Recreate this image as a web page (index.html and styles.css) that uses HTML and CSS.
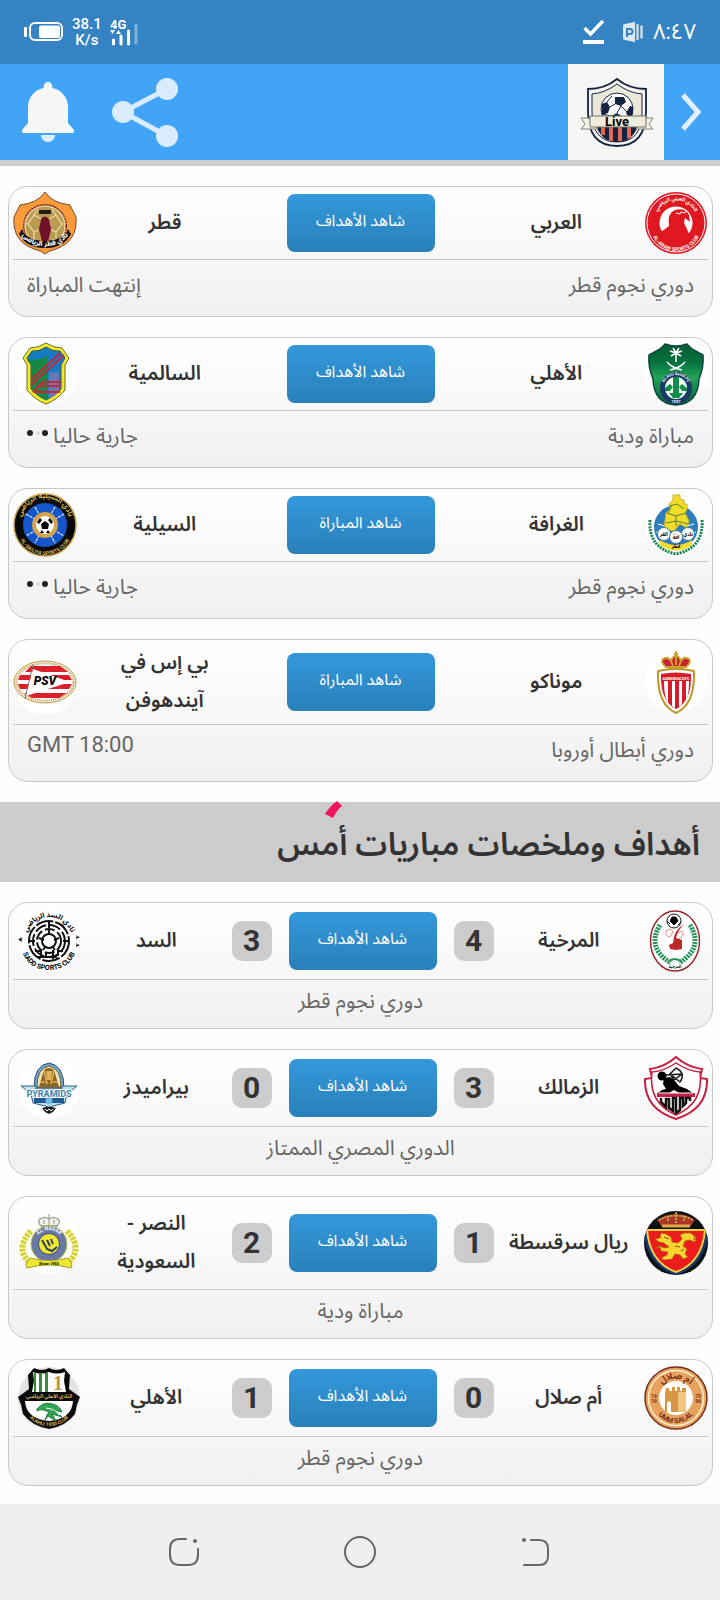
FILE: index.html
```html
<!DOCTYPE html>
<html lang="ar" dir="rtl">
<head>
<meta charset="utf-8">
<meta name="viewport" content="width=device-width, initial-scale=1">
<title>Live</title>
<link rel="stylesheet" href="styles.css">
</head>
<body>
<div class="status" dir="ltr">
  <div class="status-group">
    <svg width="40" height="20" viewBox="0 0 40 20"><rect x="0" y="5" width="3" height="10" rx="1" fill="#fff"/><rect x="6" y="1" width="32" height="17" rx="5" fill="none" stroke="#fff" stroke-width="2"/><rect x="15" y="3.500" width="21" height="12.500" rx="2" fill="#fff"/></svg>
    <div class="speed"><span>38.1</span><span>K/s</span></div>
    <svg width="29" height="28" viewBox="0 0 29 28"><text x="0" y="11" class="net">4G</text><path d="M0 12h5l-2.500 4zM6 16h5l-2.500-4z" fill="#fff"/><path d="M3.500 22v4M11 18v8M18.500 13v13" stroke="#fff" stroke-width="3" stroke-linecap="round"/><path d="M26 7v18" stroke="#7fb2dd" stroke-width="3" stroke-linecap="round"/></svg>
  </div>
  <div class="status-group right">
    <svg width="22" height="26" viewBox="0 0 22 26"><path d="M1.500 9l6 6L20 2" fill="none" stroke="#fff" stroke-width="3.500"/><rect y="21" width="21" height="4" fill="#fff"/></svg>
    <svg width="20" height="20" viewBox="0 0 20 20"><path d="M2 2l10-2v20L2 18q-2 0-2-2V4q0-2 2-2z" fill="#dbe9f5"/><path d="M4 15V7h3a2.500 2.500 0 0 1 0 5H4" fill="none" stroke="#3583c3" stroke-width="2"/><path d="M14.500 2v16M18.500 3.500v13" stroke="#c4dcef" stroke-width="2.500"/></svg>
    <span class="clock">٨:٤٧</span>
  </div>
</div>
<header class="bar" dir="ltr">
  <div class="actions">
    <button class="icon" type="button" aria-label="التنبيهات"><svg width="54" height="64" viewBox="0 0 54 64"><path d="M27 2c3 0 4 2 4.500 6C41 10 47 18 47 27v16l6 7v3H1v-3l6-7V27C7 18 13 10 22.500 8 23 4 24 2 27 2z" fill="#f6f6f6"/><path d="M20 55h14c0 4-3 7-7 7s-7-3-7-7z" fill="#dceefe"/></svg></button>
    <button class="icon" type="button" aria-label="مشاركة"><svg width="68" height="70" viewBox="0 0 68 70"><path d="M56 12L12 35l44 24" fill="none" stroke="#d9ecfd" stroke-width="5"/><g fill="#d9ecfd"><circle cx="56" cy="12" r="11"/><circle cx="12" cy="35" r="11"/><circle cx="56" cy="59" r="11"/></g></svg></button>
  </div>
  <div class="brand">
    <div class="tile"><svg width="96" height="96" viewBox="0 0 96 96"><path d="M49 15Q37 25 20 25v22q0 35 29 35t29-35V25Q61 25 49 15z" fill="#f6f6f6" stroke="#14233f" stroke-width="1.800"/><path d="M49 20Q37 29 24 30v18q0 30 25 30t25-30V30Q61 29 49 20z" fill="#ebe8da" stroke="#14233f" stroke-width="1"/><path d="M28 61h42q-5 17-21 17T28 61z" fill="#14233f"/><path d="M35 62v9M43 62v15M52 62v15M61 62v12" stroke="#e16855" stroke-width="4"/><circle cx="49" cy="45" r="16" fill="#fff" stroke="#14233f"/><path d="M47 33h9l2 5-5 4-6-2zM34 40l5-2 3 5-2 6-6 2zM62 42l3 1v7l-4 4-3-5zM43 52l6-3 6 4-2 6H44z" fill="#14233f"/><path d="M42 43l5-3M49 49l4-7M53 42l6 6M39 38l5-6M34 50l9 2" stroke="#14233f"/><path d="M20 54h-7l4 6-4 5h17M78 54h7l-4 6 4 5H68" fill="#f3f1e6" stroke="#7c8475"/><path d="M22 52h56v11H22z" fill="#efecdc" stroke="#6d7468"/><text x="49" y="62" class="live">Live</text></svg></div>
    <button class="icon" type="button" aria-label="رجوع"><svg width="22" height="40" viewBox="0 0 22 40"><path d="M3 3l15 17L3 37" fill="none" stroke="#e3f1fe" stroke-width="5"/></svg></button>
  </div>
</header>

<main>
<section class="list today">
  <article class="card">
    <div class="teams">
      <svg class="crest" viewBox="0 0 64 64"><circle cx="32" cy="32" r="31" fill="#e01822"/><circle cx="32" cy="32" r="29" fill="none" stroke="#fff"/><circle cx="32" cy="32" r="16.500" fill="#fff"/><path d="M17 41l8-6q-2-13 6-16 10-3 14 5l1 7-5-4q-2 5 1 9l4 9q-14 9-26 0z" fill="#e01822"/><path d="M32 22l4 1 1-2 4 1 1-2" fill="none" stroke="#fff"/><path id="ar1" d="M11 30a21 21 0 0 1 42 0" fill="none"/><path id="ar2" d="M7 35a25 25 0 0 0 50 0" fill="none"/><text class="c5 white"><textPath href="#ar1" startOffset="50%">النادي العربي الرياضي</textPath></text><text class="c5 white"><textPath href="#ar2" startOffset="50%">AL-ARABI SPORTS CLUB</textPath></text></svg>
      <h3 class="team">العربي</h3>
      <button class="watch" type="button">شاهد الأهداف</button>
      <h3 class="team">قطر</h3>
      <svg class="crest" viewBox="0 0 64 64"><path d="M32 1q7 11 25 13l6 12q2 24-20 32-8 2-11 5-3-3-11-5Q-1 50 1 26l6-12Q25 12 32 1z" fill="#f99a3b" stroke="#7b4b25"/><circle cx="32" cy="35" r="21" fill="#6c1327" stroke="#6c1327" stroke-width="2" stroke-dasharray="2 1"/><circle cx="32" cy="35" r="20" fill="#b99a51" stroke="#e7d49b" stroke-width="1.500"/><path d="M21 24l-6 9 6 8 9-4v-8zM43 24l6 9-6 8-9-4v-8zM21 41v8M43 41v8M21 24l4-6M43 24l-4-6M15 33h-3M49 33h3" fill="none" stroke="#eedca2" stroke-width="1.200"/><path d="M28 28q4-5 8 0l1 6q2 4 0 8l-2 9h-6l-2-9q-2-4 0-8z" fill="#701029"/><path d="M26 19h12v4H26z" fill="#211c16"/><path d="M9 38q3 11 23 12 20-1 23-12l3 5q-7 14-26 14T6 43z" fill="#111"/><path id="qt" d="M8 43q8 12 24 12t24-12" fill="none"/><text class="c7 white"><textPath href="#qt" startOffset="50%">نادي قطر الرياضي</textPath></text></svg>
    </div>
    <div class="info"><span>دوري نجوم قطر</span><span>إنتهت المباراة</span></div>
  </article>

  <article class="card">
    <div class="teams">
      <svg class="crest" viewBox="0 0 64 64"><circle cx="32" cy="32" r="31" fill="#fff"/><defs><linearGradient id="ahg" x2="0" y2="1"><stop offset="0" stop-color="#075b32"/><stop offset=".3" stop-color="#06713e"/><stop offset=".55" stop-color="#22a457"/><stop offset="1" stop-color="#075b38"/></linearGradient></defs><path d="M21 2q11 4 22 0l5 5 11 6q1 12-4 24-1 25-23 26Q10 62 9 37 4 25 5 13l11-6z" fill="url(#ahg)" stroke="#0c463d" stroke-width="1.500"/><path d="M32 10v10M32 11l-6-2M32 11l6-2M32 11l-5 3M32 11l5 3M32 11l-3-5M32 11l3-5" stroke="#fff" stroke-width="1.500"/><path d="M23 20q5 6 15 8M41 20q-5 6-15 8" fill="none" stroke="#fff" stroke-width="1.500"/><circle cx="32" cy="46" r="16" fill="#173b65"/><circle cx="32" cy="46" r="11" fill="#f0fff4"/><path d="M29 35h6v21h-6zM21 46l5-4 3 3-3 4h-5zM43 46l-5-4-3 3 3 4h5zM25 51h4v5zM35 51h4l-4 5z" fill="#148c4c"/><path id="ah" d="M19 46a13 13 0 0 1 26 0" fill="none"/><text class="c4 white"><textPath href="#ah" startOffset="50%">Al-Ahli Saudi FC</textPath></text><text x="32" y="61" class="c4 white">1937</text></svg>
      <h3 class="team">الأهلي</h3>
      <button class="watch" type="button">شاهد الأهداف</button>
      <h3 class="team">السالمية</h3>
      <svg class="crest" viewBox="0 0 64 64"><circle cx="33" cy="32" r="31" fill="#fff"/><path d="M33 1q8 5 16 5l7 10-4 7v25q-8 10-19 14Q22 58 14 48V23l-4-7 7-10q8 0 16-5z" fill="#f5e928" stroke="#666b25"/><path d="M33 5q7 5 14 4l5 7-4 7v24q-6 7-15 11-9-4-15-11V23l-4-7 5-7q7 1 14-4z" fill="#157cc4" stroke="#344f58"/><path d="M14 18q11 0 21-4v43l-2 1q-9-4-15-11V23z" fill="#168649"/><path d="M36 30h10v20q-5 5-10 7z" fill="#6779b5"/><path d="M18 38l29-27M18 43l33-30M20 50l10-10h18M24 44h24M20 50h27" stroke="#d22236" stroke-width="1.800" fill="none"/></svg>
    </div>
    <div class="info"><span>مباراة ودية</span><span class="live-now">جارية حاليا<svg width="22" height="10" viewBox="0 0 22 10"><circle cx="3" cy="5" r="3" fill="#222"/><circle cx="11" cy="5" r="2" fill="#ddd"/><circle cx="18" cy="5" r="3" fill="#222"/></svg></span></div>
  </article>

  <article class="card">
    <div class="teams">
      <svg class="crest" viewBox="0 0 64 64"><circle cx="32" cy="32" r="31" fill="#fff"/><circle cx="32" cy="34" r="22" fill="#2f7cba"/><path d="M14 31l7 2 2 8M50 31l-7 2-2 8M12 39l12 3M52 39l-12 3" stroke="#fff" fill="none"/><path d="M29 2h7v4l4 1v4h3v5l-2 4 4 8-2 7-7-4-6 7-10-2 2-16 4-4-1-5 4-4z" fill="#f2dc27" stroke="#c5b42a"/><path d="M25 13l8-2 7 5M23 20l9 3 10-3M32 23v10M22 30l10-2 12 3M28 12l-4 8" fill="none" stroke="#55843a"/><path d="M6 27q-2 28 26 34 28-6 26-34" fill="none" stroke="#168354" stroke-width="3" stroke-dasharray="2 1"/><path d="M16 47q16 10 32 0v5q-16 11-32 0z" fill="#f5dc2e"/><g fill="#fff" stroke="#397f9d"><circle cx="20" cy="41" r="6.500"/><circle cx="44" cy="41" r="6.500"/><circle cx="32" cy="44" r="6.500"/></g><g class="c5"><text x="20" y="43">الغر</text><text x="32" y="46">افة</text><text x="44" y="43">نادي</text><text x="32" y="55">قطر</text></g></svg>
      <h3 class="team">الغرافة</h3>
      <button class="watch" type="button">شاهد المباراة</button>
      <h3 class="team">السيلية</h3>
      <svg class="crest" viewBox="0 0 64 64"><circle cx="32" cy="32" r="31" fill="#090909" stroke="#c4a14b" stroke-width="1.500"/><circle cx="32" cy="32" r="22" fill="#1556cc"/><path d="M13 21l38 22M51 21L13 43M22 14l20 36M42 14L22 50" stroke="#dce7ff" stroke-width="1.300" stroke-dasharray="3 1"/><circle cx="32" cy="32" r="13" fill="#d2a24d"/><circle cx="32" cy="32" r="9" fill="#fff"/><path d="M32 28l4 3-1 5h-6l-1-5zM24 29l3-4 2 2-3 4zM40 29l-3-4-2 2 3 4zM27 40l2-3 2 3zM37 40l-2-3-2 3z"/><path id="sl1" d="M8 29a24 24 0 0 1 48 0" fill="none"/><path id="sl2" d="M5 35a27 27 0 0 0 54 0" fill="none"/><text class="c7 gold"><textPath href="#sl1" startOffset="50%">نادي السيلية الرياضي</textPath></text><text class="c5 gold"><textPath href="#sl2" startOffset="50%">AL-SAILIYA SPORTS CLUB</textPath></text></svg>
    </div>
    <div class="info"><span>دوري نجوم قطر</span><span class="live-now">جارية حاليا<svg width="22" height="10" viewBox="0 0 22 10"><circle cx="3" cy="5" r="3" fill="#222"/><circle cx="11" cy="5" r="2" fill="#ddd"/><circle cx="18" cy="5" r="3" fill="#222"/></svg></span></div>
  </article>

  <article class="card">
    <div class="teams">
      <svg class="crest" viewBox="0 0 64 64"><circle cx="32" cy="32" r="31" fill="#fff"/><path d="M22 17q-6-5-3-8 5-3 8 2 2-5 5-5t5 5q3-5 8-2 3 3-3 8z" fill="#c92034" stroke="#caa12d" stroke-width="2"/><path d="M32 1v14M30 4h4M24 18h16M27 11l2 5M37 11l-2 5" stroke="#caa12d" stroke-width="2"/><path d="M14 21q18-4 36 0 1 34-18 42Q13 55 14 21z" fill="#fff" stroke="#bd992b" stroke-width="2"/><path d="M17 24q15-3 30 0 1 27-15 35-16-8-15-35z" fill="#d71b29"/><path d="M20 31h4v22q-4-6-4-22zM28 31h3v27l-3-2zM35 31h3v23l-3 3zM42 31h3q0 14-3 20z" fill="#fff"/><text x="32" y="30" class="c4 white">ASMONACOFC</text></svg>
      <h3 class="team">موناكو</h3>
      <button class="watch" type="button">شاهد المباراة</button>
      <h3 class="team">بي إس في آيندهوفن</h3>
      <svg class="crest" viewBox="0 0 64 64"><circle cx="32" cy="34" r="31" fill="#fff"/><ellipse cx="32" cy="32" rx="31" ry="21" fill="#f8edcf" stroke="#bd9b55"/><ellipse cx="32" cy="32" rx="28.500" ry="18.500" fill="#fff" stroke="#c3a164" stroke-width="2" stroke-dasharray="1 1"/><path d="M18 16h29l8 6H12zM7 25h49l3 5H5zM5 34h54l-3 5H7zM11 43h43l-8 5H19z" fill="#db202b"/><path d="M20 19l37 13-44 14z" fill="#fff"/><path d="M20 14L12 49" stroke="#777"/><text x="32" y="35" class="psv">PSV</text></svg>
    </div>
    <div class="info"><span>دوري أبطال أوروبا</span><span class="time" dir="ltr">GMT 18:00</span></div>
  </article>
</section>

<div class="heading">
  <svg class="spinner" width="18" height="18" viewBox="0 0 18 18"><path d="M12 0l5 5q-5 4-9 12L0 13Q5 5 12 0z" fill="#ee1561"/></svg>
  <h2>أهداف وملخصات مباريات أمس</h2>
</div>

<section class="list yesterday">
  <article class="card">
    <div class="teams">
      <svg class="crest" viewBox="0 0 64 64"><ellipse cx="31" cy="32" rx="24.500" ry="30" fill="#fff" stroke="#9c2730" stroke-width="1.500"/><path d="M16 16Q2 39 27 54M46 16q14 23-11 38" fill="none" stroke="#25945a" stroke-width="5" stroke-dasharray="2 1"/><circle cx="30" cy="12" r="7" fill="#fff" stroke="#111"/><path d="M28 8h4l2 4-4 4-4-4zM23 12l3 3M34 16l3-3" stroke="#111"/><path d="M40 15q-6 6-8 14l6 2v9l-6 1-6-1-1-4 4-2 1-6q2-8 10-13z" fill="#bd292b"/><path d="M22 22q5-4 7 1l-3 5q-5 0-4-6zM34 24q6-4 5 2l-4 4" fill="none" stroke="#e18b86"/><path d="M24 53q7-6 14 0" fill="none" stroke="#25945a" stroke-width="2"/><text x="31" y="59" class="c4">المرخية</text></svg>
      <h3 class="team">المرخية</h3><span class="score">4</span>
      <button class="watch" type="button">شاهد الأهداف</button>
      <span class="score">3</span><h3 class="team">السد</h3>
      <svg class="crest" viewBox="0 0 64 64"><circle cx="32" cy="32" r="31" fill="#fff"/><g fill="none" stroke="#111"><circle cx="32" cy="32" r="20" stroke-width="2" stroke-dasharray="18 2"/><circle cx="32" cy="32" r="16" stroke-width="2" stroke-dasharray="12 3"/><circle cx="32" cy="32" r="12" stroke-width="2" stroke-dasharray="10 3"/><circle cx="32" cy="32" r="7" stroke-width="2"/><path d="M32 12v7M12 32h6M46 32h6M18 42h5M41 42h5M24 41v7M29 43v6M36 41v9M41 41v6M20 48h20" stroke-width="2"/></g><path d="M32 21v5M22 29l5 2M42 29l-5 2M26 41l3-4M38 41l-3-4" stroke="#111" stroke-width="2"/><path d="M1 30l5-1-4 3 2-4 1 5zM59 27l4 1-4 2 1-4zM59 35l4 1-4 2 1-4z"/><path id="sd1" d="M9 31a23 23 0 0 1 46 0" fill="none"/><path id="sd2" d="M3 36q6 25 29 25t29-25" fill="none"/><text class="c7"><textPath href="#sd1" startOffset="50%">نادي السد الرياضي</textPath></text><text class="c7"><textPath href="#sd2" startOffset="50%">SADD SPORTS CLUB</textPath></text></svg>
    </div>
    <div class="info"><span>دوري نجوم قطر</span></div>
  </article>

  <article class="card">
    <div class="teams">
      <svg class="crest" viewBox="0 0 64 64"><path d="M32 1q11 10 26 12l-2 9 7 1q1 30-31 40Q0 53 1 23l7-1-2-9Q21 11 32 1z" fill="#fff" stroke="#c51f42" stroke-width="2"/><path d="M32 7q12 8 24 9 4 31-24 43Q4 47 8 16 20 15 32 7z" fill="#fff" stroke="#c51f42" stroke-width="1.500"/><circle cx="18" cy="20" r="4.500"/><path d="M20 22l6-1 5 4 4 5 8 3 7 5H37l-7-4-5 3H14l4-3 4-1-3-5z"/><path d="M22 19l17-1M32 12q10 5 4 14M32 12l-6 6 10 8M26 18l4 6 8-6" fill="none" stroke="#111" stroke-width="1.500"/><path d="M13 39h38" stroke="#c51f42" stroke-width="4"/><path d="M15 37h34" stroke="#fff"/><path d="M17 42v4l5 5v-8h3v9l4 3V42h3v15l4-3V42h3v8l3-3V42h4v3" fill="none" stroke="#111" stroke-width="2.500"/></svg>
      <h3 class="team">الزمالك</h3><span class="score">3</span>
      <button class="watch" type="button">شاهد الأهداف</button>
      <span class="score">0</span><h3 class="team">بيراميدز</h3>
      <svg class="crest" viewBox="0 0 64 64"><circle cx="32" cy="32" r="31" fill="#fff"/><path d="M17 32q0-23 15-25 15 2 15 25z" fill="#6fa6ca" stroke="#245177"/><path d="M20 31q0-19 12-21 12 2 12 21z" fill="#eee2bb" stroke="#745b2c"/><path d="M22 31l5-17q5-4 10 0l5 17z" fill="#8c6527"/><path d="M27 14l3 14M37 14l-3 14M23 26h5M36 26h5" stroke="#e2b758" stroke-width="1.500"/><path d="M29 15h6l-1 9h-4z" fill="#deb457"/><path d="M4 30h15v3h26v-3h15L50 38l-2 9 -16 4-16-4-2-9z" fill="#bce1ef" stroke="#315f7f"/><path d="M17 42h30v5H17z" fill="#1f5991"/><text x="32" y="41" class="pyr">PYRAMIDS</text><circle cx="32" cy="45" r="3.500" fill="#74bce2"/><path d="M25 52l4-1h6l4 1-3 4-4 2-4-2z" fill="#222"/><path d="M28 53l2 2 2-2 2 2 2-2" stroke="#fff" fill="none"/></svg>
    </div>
    <div class="info"><span>الدوري المصري الممتاز</span></div>
  </article>

  <article class="card">
    <div class="teams">
      <svg class="crest" viewBox="0 0 64 64"><defs><clipPath id="rz"><circle cx="32" cy="32" r="32"/></clipPath></defs><g clip-path="url(#rz)"><path d="M0 0h64v64H0z" fill="#0a1114"/><path d="M1 15q2 36 31 47 29-11 31-47" fill="none" stroke="#17386f" stroke-width="5"/><path d="M18 16l-5-7q8-6 19-6t19 6l-5 7z" fill="#aa3425"/><path d="M18 15h28" stroke="#dfa846" stroke-width="3"/><path d="M15 9q17-9 34 0M24 5v6M32 1v11M40 5v6" fill="none" stroke="#c9a04a" stroke-width="2" stroke-dasharray="2 1"/><path d="M3 19h58q-3 33-29 42Q6 52 3 19z" fill="#ec1c1d" stroke="#f6cf42" stroke-width="2"/><path d="M17 22l5 1 5 3 1 5 6 1 4-4-2-4 4-2h7l5 4-1 5-5-2-5 1-2 5 4 3-2 5 3 3-5 2-3-4-5-1-3 5-8 1-3-2 6-3 1-3-7-1-1-4-4 1 3-2 6 2 4-1-5-4-5-1-4-3 5-1z" fill="#f8d331" stroke="#a46211" stroke-width=".7"/><path d="M47 22q5 2 3 7M20 26l5 2M31 35l5 1M37 40l3-2" fill="none" stroke="#8f4f16"/></g></svg>
      <h3 class="team">ريال سرقسطة</h3><span class="score">1</span>
      <button class="watch" type="button">شاهد الأهداف</button>
      <span class="score">2</span><h3 class="team">النصر - السعودية</h3>
      <svg class="crest" viewBox="0 0 64 64"><circle cx="32" cy="32" r="31" fill="#fff"/><path d="M24 15q-4-4-1-7 5-3 9 0 4-3 9 0 3 3-1 7z" fill="#eff1ef" stroke="#a4a896" stroke-width="1.500"/><path d="M32 3v11M24 15h16M27 9v4M37 9v4" stroke="#909687"/><path d="M14 20Q-4 39 16 54M50 20q18 19-2 34" fill="none" stroke="#d6d22e" stroke-width="6" stroke-dasharray="3 1"/><circle cx="32" cy="33" r="18" fill="#6879a5" stroke="#c4c43c"/><circle cx="32" cy="33" r="10.500" fill="#f1e92b" stroke="#394978"/><path d="M25 29l5 9 5 2 5-4M30 29l3 6M34 28l2 5" fill="none" stroke="#2c4167" stroke-width="2"/><path d="M13 47q19 5 38 0l4 6-1 4q-22-6-44 0l-1-4z" fill="#f0e82e" stroke="#a09e36"/><path id="ns" d="M18 33a14 14 0 0 1 28 0" fill="none"/><text class="c5 white"><textPath href="#ns" startOffset="50%">AL-NASSR</textPath></text><text x="32" y="54" class="c4">Since 1955</text></svg>
    </div>
    <div class="info"><span>مباراة ودية</span></div>
  </article>

  <article class="card">
    <div class="teams">
      <svg class="crest" viewBox="0 0 64 64"><circle cx="32" cy="32" r="31" fill="#e7a35e" stroke="#762e20" stroke-width="1.500"/><circle cx="32" cy="32" r="27.500" fill="none" stroke="#fff0d0" stroke-width="1.500"/><circle cx="32" cy="32" r="17" fill="#fff"/><path d="M21 27l1-5h3v3h3v-4h3v4h2v-4h3v4h2v-3h4v24H21z" fill="#d79643"/><path d="M34 26h8v20h-8z" fill="#efc57f"/><path d="M23 46V37q2-4 4 0v9z" fill="#fff"/><path id="us1" d="M14 24a20 20 0 0 1 36 0" fill="none"/><path id="us2" d="M8 39q9 19 24 18t24-18" fill="none"/><text class="c9 maroon"><textPath href="#us1" startOffset="50%">أم صلال</textPath></text><text class="c7 maroon"><textPath href="#us2" startOffset="50%">UMM SALAL</textPath></text><g class="c5 maroon"><text x="10" y="32">19</text><text x="10" y="37">19</text><text x="54" y="32">79</text><text x="54" y="37">96</text></g></svg>
      <h3 class="team">أم صلال</h3><span class="score">0</span>
      <button class="watch" type="button">شاهد الأهداف</button>
      <span class="score">1</span><h3 class="team">الأهلي</h3>
      <svg class="crest" viewBox="0 0 64 64"><circle cx="32" cy="32" r="31" fill="#e3e3e3"/><path d="M17 2q8 4 15 0 7 4 15 0l6 7-1 14 11 8q-4 8-5 17-9 12-26 15Q15 60 6 48 5 39 1 31l11-8-1-14z" fill="#0a0a0a"/><path d="M16 6q8 3 16 0 8 3 16 0l-1 9 2 11H15l2-11z" fill="#fff"/><path d="M17 7h2v19h-2zM22 7h3v19h-3zM28 7h3v19h-3z" fill="#348c37"/><text x="41" y="24" class="one">1</text><path d="M8 35h48q-1 18-24 20Q9 53 8 35z" fill="#fff"/><path d="M20 43q7-8 15-5 7 1 10 8l-9-2 9 7-10-3 4 7-8-5-3 4q2-6 4-8-8-4-12-1z" fill="#30a652" stroke="#247b3b"/><path d="M29 42q10 1 13 7" stroke="#fff" fill="none"/><text x="32" y="32" class="c5 gold">النادي الأهلي الرياضي</text><path id="al" d="M8 45q8 15 24 15t24-15" fill="none"/><text class="c5 gold"><textPath href="#al" startOffset="50%">ALAHLI 1950 CLUB</textPath></text></svg>
    </div>
    <div class="info"><span>دوري نجوم قطر</span></div>
  </article>
</section>
</main>

<nav class="keys" dir="ltr">
  <button class="icon" type="button" aria-label="التطبيقات"><svg width="32" height="32" viewBox="0 0 32 32"><path d="M18 3h-6Q2 3 2 13v6q0 10 10 10h8q10 0 10-10v-6" fill="none" stroke="#666" stroke-width="2" stroke-linecap="round"/><circle cx="27" cy="5" r="2" fill="#666"/></svg></button>
  <button class="icon" type="button" aria-label="الرئيسية"><svg width="34" height="34" viewBox="0 0 34 34"><circle cx="17" cy="17" r="15" fill="none" stroke="#666" stroke-width="2"/></svg></button>
  <button class="icon" type="button" aria-label="العودة"><svg width="32" height="32" viewBox="0 0 32 32"><path d="M11 4h8q9 0 9 9v7q0 9-9 9H4" fill="none" stroke="#666" stroke-width="2" stroke-linecap="round"/><circle cx="4" cy="4" r="2" fill="#666"/></svg></button>
</nav>
</body>
</html>
```
FILE: styles.css
```css
* { box-sizing: border-box; }
body {
  margin: 0;
  min-height: 100vh;
  display: flex;
  flex-direction: column;
  background: #fefefe;
  color: #333;
  font-family: Roboto, "Noto Sans Arabic", "Noto Sans", "DejaVu Sans", sans-serif;
}
svg { display: block; flex: none; }
button { font: inherit; border: 0; padding: 0; cursor: pointer; }
h2, h3 { margin: 0; font-weight: 600; }
.icon { background: none; }

.status {
  height: 64px;
  padding: 0 24px;
  display: flex;
  justify-content: space-between;
  align-items: center;
  background: #3583c3;
  color: #fff;
}
.status-group { display: flex; align-items: center; gap: 8px; }
.status-group.right { gap: 18px; }
.status-group.right .clock { margin-left: -8px; }
.speed {
  display: flex;
  flex-direction: column;
  align-items: center;
  font-size: 15px;
  font-weight: 500;
  line-height: 16px;
}
.net { font: bold 13px Roboto, sans-serif; fill: #fff; }
.clock { font-size: 22px; line-height: 32px; }

.bar {
  height: 102px;
  padding: 0 18px 0 21px;
  display: flex;
  justify-content: space-between;
  align-items: center;
  background: #42a4f6;
  border-bottom: 6px solid #ccc;
}
.actions { display: flex; align-items: center; gap: 36px; }
.brand { display: flex; align-items: center; gap: 16px; }
.tile { background: #f6f6f6; }
.live { font: bold 13px Roboto, sans-serif; text-anchor: middle; }

.list { display: flex; flex-direction: column; gap: 20px; padding: 20px 7px 20px 8px; }
.list.yesterday { padding-bottom: 16px; }
.card {
  padding: 0 4px;
  border: 1px solid #c8c8c8;
  border-radius: 20px;
  background: linear-gradient(#fff, #f0f0f0);
}
.teams {
  display: grid;
  align-items: center;
  justify-items: center;
  border-bottom: 1px solid #c8c8c8;
}
.today .teams {
  min-height: 73px;
  padding: 2px 0;
  grid-template-columns: 64px 1fr 216px 1fr 64px;
}
.yesterday .teams {
  min-height: 77px;
  padding: 6px 0 6px 4px;
  grid-template-columns: 64px 1fr 40px 182px 40px 1fr 64px;
}
.crest { width: 64px; height: 64px; direction: ltr; }
.team {
  max-width: 130px;
  padding: 1px 0 3px;
  text-align: center;
  font-size: 20px;
  line-height: 38px;
}
.watch {
  width: 148px;
  height: 58px;
  padding-bottom: 4px;
  border-radius: 8px;
  background: linear-gradient(#3498db, #2980b9);
  color: #fff;
  font-size: 16px;
}
.score {
  width: 40px;
  height: 40px;
  border-radius: 10px;
  background: #ccc;
  text-align: center;
  font-size: 30px;
  font-weight: bold;
  line-height: 40px;
}
.info {
  display: flex;
  justify-content: space-between;
  padding: 4px 14px;
  min-height: 56px;
  color: #666;
  font-size: 21px;
  line-height: 42px;
}
.yesterday .info { justify-content: center; min-height: 48px; padding: 0 14px; }
.live-now { display: flex; gap: 4px; }
.live-now svg { margin-top: 13px; }
.time { font-size: 22px; line-height: 32px; }

.heading {
  position: relative;
  height: 80px;
  padding: 0 20px;
  background: #ccc;
}
.heading h2 { font-size: 32px; line-height: 84px; }
.spinner { position: absolute; left: 325px; top: -1px; }

.keys {
  margin-top: auto;
  height: 96px;
  padding: 0 168px;
  display: flex;
  justify-content: space-between;
  align-items: center;
  background: #efefef;
}

.crest text { text-anchor: middle; font-family: Roboto, "Noto Sans Arabic", "DejaVu Sans", sans-serif; font-weight: bold; }
.c4 { font-size: 4px; }
.c5 { font-size: 5px; }
.c7 { font-size: 7px; }
.c9 { font-size: 9px; }
.white { fill: #fff; }
.gold { fill: #dfb84f; }
.maroon { fill: #762e20; }
.crest .psv { font-size: 12px; font-style: italic; font-weight: 900; }
.crest .pyr { font-size: 9px; fill: #397fb2; stroke: #fff; stroke-width: 2px; paint-order: stroke; }
.crest .one { font-family: "Liberation Serif", serif; font-size: 20px; fill: #bf973e; }
```
